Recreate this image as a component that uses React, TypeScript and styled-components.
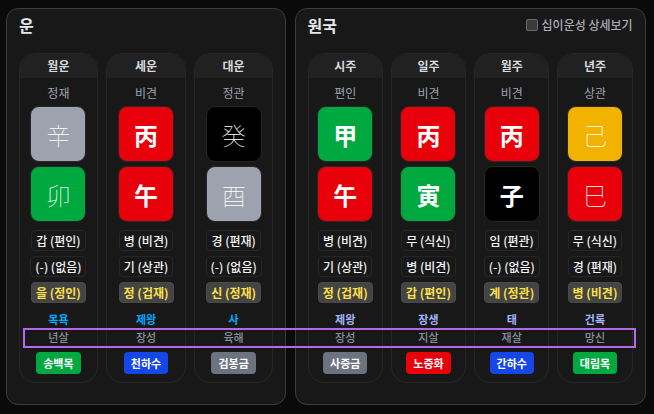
import React from "react";
import styled, { createGlobalStyle } from "styled-components";

const Global = createGlobalStyle`
  html, body { margin: 0; padding: 0; background: #0a0a0a; }
  * { box-sizing: border-box; }
  body { font-family: "Noto Sans CJK KR", "Noto Sans", sans-serif; }
`;

const Page = styled.div`
  position: relative;
  width: 654px;
  height: 414px;
  padding: 8px 8px 9px 6px;
  display: grid;
  grid-template-columns: 280px 351px;
  gap: 8.6px;
`;
const Panel = styled.section`
  background: #181818;
  border: 1px solid #3c3c3c;
  border-radius: 12px;
  padding: 4px 12px 12px;
  display: flex;
  flex-direction: column;
`;
const PanelHead = styled.header`
  height: 40px;
  display: flex;
  justify-content: space-between;
  align-items: flex-start;
`;
const Title = styled.h2`
  margin: 0;
  font-size: 16px;
  line-height: 24px;
  font-weight: 700;
  color: #e5e7eb;
`;
const Toggle = styled.label`
  display: flex;
  align-items: center;
  gap: 4px;
  font-size: 12px;
  font-weight: 500;
  line-height: 24px;
  color: #a8adb5;
`;
const Box = styled.span`
  width: 12px;
  height: 12px;
  background: #3b3b3b;
  border: 1px solid #6b6b6b;
  border-radius: 2px;
`;
const Columns = styled.div<{ $cols: string; $gap: number }>`
  display: grid;
  grid-template-columns: ${(p) => p.$cols};
  gap: ${(p) => p.$gap}px;
`;
const Column = styled.article`
  height: 330px;
  border: 1px solid #262626;
  border-radius: 16px;
  display: flex;
  flex-direction: column;
  align-items: center;
  overflow: hidden;
`;
const ColHead = styled.div`
  align-self: stretch;
  height: 24px;
  background: #212121;
  color: #d8dadf;
  font-size: 12px;
  font-weight: 700;
  line-height: 24px;
  text-align: center;
`;
const TenGod = styled.div`
  margin-top: 6px;
  height: 22px;
  font-size: 12px;
  line-height: 18px;
  color: #9ca3af;
`;
const Tile = styled.div<{ $bg: string; $thin?: boolean }>`
  width: 56px;
  height: 56px;
  margin-bottom: 4px;
  border-radius: 9px;
  border: 1px solid #262626;
  background: ${(p) => p.$bg};
  color: #fff;
  display: flex;
  align-items: center;
  justify-content: center;
  font-size: 24px;
  font-weight: ${(p) => (p.$thin ? 100 : 700)};
`;
const Pills = styled.div`
  margin-top: 4px;
  display: flex;
  flex-direction: column;
  align-items: center;
  gap: 5px;
`;
const Pill = styled.div<{ $hi?: boolean }>`
  height: 21px;
  padding: 0 4px;
  border-radius: 4px;
  border: 1px solid ${(p) => (p.$hi ? "#4a4a4a" : "#262626")};
  background: ${(p) => (p.$hi ? "#444444" : "transparent")};
  color: ${(p) => (p.$hi ? "#fde047" : "#f3f4f6")};
  font-size: 12px;
  font-weight: ${(p) => (p.$hi ? 700 : 500)};
  line-height: 19px;
  white-space: nowrap;
`;
const Stage = styled.div<{ $c: string }>`
  margin-top: 7px;
  height: 18px;
  font-size: 11px;
  font-weight: 700;
  line-height: 18px;
  color: ${(p) => p.$c};
`;
const Spirit = styled.div`
  height: 19px;
  font-size: 11px;
  font-weight: 500;
  line-height: 19px;
  color: #8b919c;
`;
const Badge = styled.div<{ $bg: string }>`
  margin-top: 5px;
  height: 22px;
  padding: 0 7px;
  border-radius: 4px;
  background: ${(p) => p.$bg};
  color: #fff;
  font-size: 11px;
  font-weight: 700;
  line-height: 22px;
`;
const Highlight = styled.div`
  position: absolute;
  left: 23px;
  top: 328px;
  width: 613px;
  height: 20px;
  border: 2px solid #b469e8;
  pointer-events: none;
`;

const G = "#00a940", R = "#e8000b", K = "#000000", W = "#9ca3af", Y = "#f2b200", BL = "#1546e8", GR = "#6b7280";
type C = {
  h: string; t: string; s: [string, string, boolean]; b: [string, string, boolean];
  p: [string, string, string]; st: string; sp: string; bd: [string, string];
};
const un: C[] = [
  { h: "월운", t: "정재", s: ["辛", W, true], b: ["卯", G, true], p: ["갑 (편인)", "(-) (없음)", "을 (정인)"], st: "목욕", sp: "년살", bd: ["송백목", G] },
  { h: "세운", t: "비견", s: ["丙", R, false], b: ["午", R, false], p: ["병 (비견)", "기 (상관)", "정 (겁재)"], st: "제왕", sp: "장성", bd: ["천하수", BL] },
  { h: "대운", t: "정관", s: ["癸", K, true], b: ["酉", W, true], p: ["경 (편재)", "(-) (없음)", "신 (정재)"], st: "사", sp: "육해", bd: ["검봉금", GR] },
];
const won: C[] = [
  { h: "시주", t: "편인", s: ["甲", G, false], b: ["午", R, false], p: ["병 (비견)", "기 (상관)", "정 (겁재)"], st: "제왕", sp: "장성", bd: ["사중금", GR] },
  { h: "일주", t: "비견", s: ["丙", R, false], b: ["寅", G, false], p: ["무 (식신)", "병 (비견)", "갑 (편인)"], st: "장생", sp: "지살", bd: ["노중화", R] },
  { h: "월주", t: "비견", s: ["丙", R, false], b: ["子", K, false], p: ["임 (편관)", "(-) (없음)", "계 (정관)"], st: "태", sp: "재살", bd: ["간하수", BL] },
  { h: "년주", t: "상관", s: ["己", Y, true], b: ["巳", R, true], p: ["무 (식신)", "경 (편재)", "병 (비견)"], st: "건록", sp: "망신", bd: ["대림목", G] },
];

function Col({ c, stage }: { c: C; stage: string }) {
  return (
    <Column>
      <ColHead>{c.h}</ColHead>
      <TenGod>{c.t}</TenGod>
      <Tile $bg={c.s[1]} $thin={c.s[2]}>{c.s[0]}</Tile>
      <Tile $bg={c.b[1]} $thin={c.b[2]}>{c.b[0]}</Tile>
      <Pills>
        <Pill>{c.p[0]}</Pill>
        <Pill>{c.p[1]}</Pill>
        <Pill $hi>{c.p[2]}</Pill>
      </Pills>
      <Stage $c={stage}>{c.st}</Stage>
      <Spirit>{c.sp}</Spirit>
      <Badge $bg={c.bd[1]}>{c.bd[0]}</Badge>
    </Column>
  );
}

export default function App() {
  return (
    <Page>
      <Global />
      <Panel>
        <PanelHead><Title>운</Title></PanelHead>
        <Columns $cols="78.7fr 79.1fr 78.6fr" $gap={8.6}>
          {un.map((c) => <Col key={c.h} c={c} stage="#00aaff" />)}
        </Columns>
      </Panel>
      <Panel>
        <PanelHead>
          <Title>원국</Title>
          <Toggle><Box />십이운성 상세보기</Toggle>
        </PanelHead>
        <Columns $cols="repeat(4, 1fr)" $gap={8}>
          {won.map((c) => <Col key={c.h} c={c} stage="#a5b4fc" />)}
        </Columns>
      </Panel>
      <Highlight />
    </Page>
  );
}
